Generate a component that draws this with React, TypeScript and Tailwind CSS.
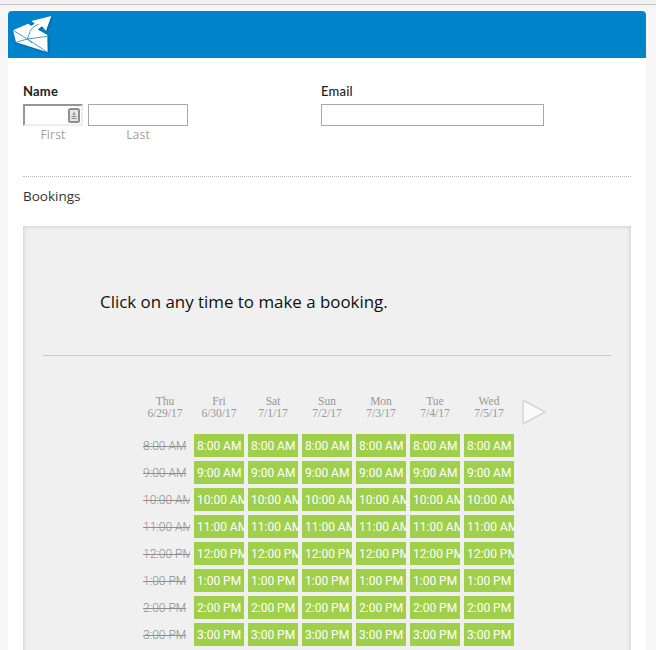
const days = [
  ["Thu", "6/29/17"],
  ["Fri", "6/30/17"],
  ["Sat", "7/1/17"],
  ["Sun", "7/2/17"],
  ["Mon", "7/3/17"],
  ["Tue", "7/4/17"],
  ["Wed", "7/5/17"],
];
const times = ["8:00 AM", "9:00 AM", "10:00 AM", "11:00 AM", "12:00 PM", "1:00 PM", "2:00 PM", "3:00 PM"];
const slots = [0, 1, 2, 3, 4, 5];

function Logo() {
  return (
    <svg width="48" height="46" viewBox="0 0 144 138" className="block drop-shadow-[1px_1px_1px_rgba(0,40,80,0.45)]">
      <path d="M15 58 L60 38 L118 72 L119 124 L24 94 Z" fill="#fff" />
      <path d="M54 76 C58 58 66 46 80 38 L70 30 L130 15 L114 60 L102 46 C92 52 86 60 84 70 L66 84 Z" fill="#fff" />
      <path d="M15 58 L58 84 L118 76 M24 94 L58 84 L119 124 M58 84 L72 96 M58 84 L66 62 C70 52 80 44 92 40" fill="none" stroke="#2f8fc8" strokeWidth="2.6" />
    </svg>
  );
}

export default function App() {
  return (
    <div className="h-[650px] w-[656px] overflow-hidden bg-[#f6f6f6] font-['Open_Sans',sans-serif]">
      <div className="h-[5px] border-b border-[#c4c4c4] bg-[#f1f1f1]" />
      <div className="ml-2 mt-[6px] h-[700px] w-[638px] bg-white">
        <div className="h-[47px] overflow-hidden rounded-t-[4px] bg-[#0083ca]">
          <Logo />
        </div>
        <div className="flex pl-[15px] pt-[25px]">
          <div className="w-[298px]">
            <div className="h-[21px] font-['Lato',sans-serif] text-[13px] font-bold leading-[17px] tracking-[0.2px] text-[#222]">Name</div>
            <div className="flex gap-[5px]">
              <div className="w-[60px]">
                <div className="flex h-[22px] items-center justify-end border-2 border-b-[#eeeeee] border-l-[#969696] border-r-[#eeeeee] border-t-[#969696] bg-white pr-[1px]">
                  <svg width="12" height="15" viewBox="0 0 12 15" className="shrink-0">
                    <rect x="1" y="1" width="10" height="13" rx="1.5" fill="#e6e6e6" stroke="#8f8f8f" strokeWidth="2" />
                    <path d="M6 3.5 L7.5 7 H4.5 Z M3.5 8 H8.5 V9 H3.5 Z M3.5 10 H8.5 V11 H3.5 Z" fill="#8f8f8f" />
                  </svg>
                </div>
                <div className="text-center text-[12px] leading-[18px] tracking-[0.2px] text-[#a0a0a0]">First</div>
              </div>
              <div className="w-[100px]">
                <div className="h-[22px] border border-[#a8a8a8] bg-white" />
                <div className="text-center text-[12px] leading-[18px] tracking-[0.2px] text-[#a0a0a0]">Last</div>
              </div>
            </div>
          </div>
          <div className="w-[223px]">
            <div className="h-[21px] font-['Lato',sans-serif] text-[13px] font-medium leading-[17px] tracking-[0.2px] text-[#222]">Email</div>
            <div className="h-[22px] border border-[#a8a8a8] bg-white" />
          </div>
        </div>
        <div className="mx-[15px] mt-[32px] border-t border-dotted border-[#bbb]" />
        <div className="ml-[15px] mt-[10px] text-[13.5px] leading-[18px] text-[#333]">Bookings</div>
        <div className="mx-[15px] mt-[21px] h-[500px] bg-[#f0f0f0] px-5 shadow-[inset_0_0_5px_rgba(0,0,0,0.18)]">
          <div className="border-b border-[#c8c8c8] pb-[41px] pl-[57px] pt-[63px] text-[16.9px] leading-[25px] text-[#111]">
            Click on any time to make a booking.
          </div>
          <div className="ml-[97px] mt-[38px] w-[430px]">
            <div className="flex h-[26px] items-start gap-1">
              {days.map(([d, date]) => (
                <div key={date} className="w-[50px] pt-[1px] text-center font-['Liberation_Serif',serif] text-[11.5px] leading-[12px] text-[#979797]">
                  <div>{d}</div>
                  <div>{date}</div>
                </div>
              ))}
              <svg width="26" height="28" viewBox="0 0 26 28" className="ml-[3px] mt-[4px] shrink-0">
                <path d="M2 2 L24 14 L2 26 Z" fill="#fafafa" stroke="#d6d6d6" strokeWidth="1.5" strokeLinejoin="round" />
              </svg>
            </div>
            <div className="mt-[14px] flex flex-col gap-1">
              {times.map((t) => (
                <div key={t} className="flex gap-1">
                  <div className="h-[23px] w-[50px] overflow-hidden whitespace-nowrap pl-[3px] font-['Roboto',sans-serif] text-[12px] font-light leading-[24px] text-[#8f8f8f] line-through">{t}</div>
                  {slots.map((s) => (
                    <div key={s} className="h-[23px] w-[50px] overflow-hidden whitespace-nowrap bg-[#a0cf4c] pl-[3px] font-['Roboto',sans-serif] text-[12px] leading-[24px] text-white">{t}</div>
                  ))}
                </div>
              ))}
            </div>
          </div>
        </div>
      </div>
    </div>
  );
}
